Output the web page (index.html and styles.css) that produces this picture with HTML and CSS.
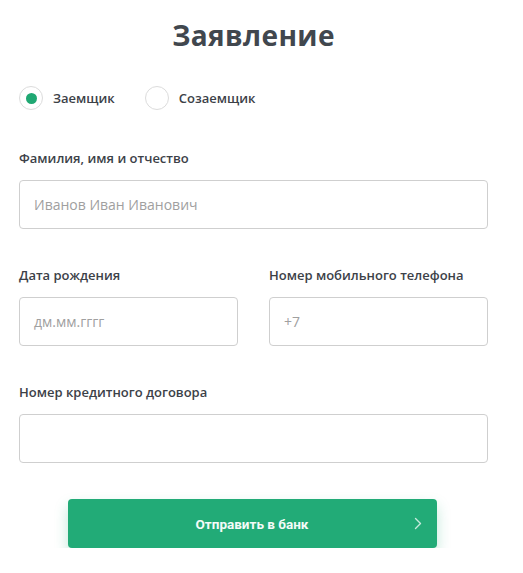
FILE: index.html
```html
<!DOCTYPE html>
<html lang="ru">
<head>
<meta charset="utf-8">
<title>Заявление</title>
<link rel="stylesheet" href="styles.css">
</head>
<body>
<form class="form">
  <h1 class="title">Заявление</h1>
  <div class="radios">
    <label class="radio">
      <span class="radio-circle radio-circle--on"><span class="radio-dot"></span></span>
      <span class="radio-label">Заемщик</span>
    </label>
    <label class="radio">
      <span class="radio-circle"></span>
      <span class="radio-label">Созаемщик</span>
    </label>
  </div>
  <div class="field field--first">
    <div class="label">Фамилия, имя и отчество</div>
    <div class="input"><span class="placeholder">Иванов Иван Иванович</span></div>
  </div>
  <div class="row">
    <div class="field">
      <div class="label">Дата рождения</div>
      <div class="input"><span class="placeholder">дм.мм.гггг</span></div>
    </div>
    <div class="field">
      <div class="label">Номер мобильного телефона</div>
      <div class="input"><span class="placeholder">+7</span></div>
    </div>
  </div>
  <div class="field">
    <div class="label">Номер кредитного договора</div>
    <div class="input"></div>
  </div>
  <div class="actions">
    <button type="button" class="button">
      <span class="button-text">Отправить в банк</span>
      <svg class="chevron" width="8" height="13" viewBox="0 0 8 13"><path d="M1.5 1.5 L6.5 6.5 L1.5 11.5" fill="none" stroke="rgba(255,255,255,0.75)" stroke-width="1.4" stroke-linecap="round" stroke-linejoin="round"/></svg>
    </button>
  </div>
</form>
</body>
</html>
```
FILE: styles.css
```css
* { box-sizing: border-box; }
html, body { margin: 0; padding: 0; background: #fff; }
body {
  font-family: "Open Sans", "Noto Sans", sans-serif;
  color: #3c4148;
}
.form {
  width: 469px;
  margin-left: 19px;
  padding-top: 15px;
  display: flex;
  flex-direction: column;
}
.title {
  margin: 0;
  text-align: center;
  font-size: 28px;
  line-height: 40px;
  font-weight: 700;
  color: #41474e;
  letter-spacing: 0.4px;
}
.radios {
  margin-top: 30px;
  display: flex;
  height: 26px;
  align-items: center;
}
.radio {
  display: flex;
  align-items: center;
  margin-right: 30px;
}
.radio-circle {
  width: 24px;
  height: 24px;
  border-radius: 50%;
  border: 1px solid #dcdcdc;
  display: flex;
  align-items: center;
  justify-content: center;
  background: #fff;
}
.radio-dot {
  width: 11px;
  height: 11px;
  border-radius: 50%;
  background: #20a873;
}
.radio-label {
  margin-left: 10px;
  font-size: 13px;
  font-weight: 600;
  color: #3c4148;
}
.field { margin-top: 36px; display: flex; flex-direction: column; }
.field--first { margin-top: 37px; }
.label {
  font-size: 13px;
  line-height: 20px;
  font-weight: 600;
  color: #3c4148;
}
.input {
  margin-top: 12px;
  height: 49px;
  border: 1px solid #cfcfcf;
  border-radius: 4px;
  display: flex;
  align-items: center;
  padding-left: 14px;
}
.placeholder {
  font-size: 14px;
  color: #a0a0a0;
}
.row {
  display: grid;
  grid-template-columns: 1fr 1fr;
  column-gap: 31px;
}
.actions {
  margin-top: 36px;
  display: flex;
  justify-content: center;
  padding-right: 3px;
}
.button {
  width: 369px;
  height: 49px;
  border: 0;
  border-radius: 4px;
  background: #22ab77;
  box-shadow: 0 7px 14px rgba(34, 171, 119, 0.28);
  display: flex;
  align-items: center;
  justify-content: center;
  position: relative;
  font-family: "Roboto", "Open Sans", sans-serif;
  font-size: 13.5px;
  font-weight: 700;
  color: #f4fbf8;
  padding: 0;
}
.chevron {
  position: absolute;
  right: 15px;
  top: 18px;
}
```
